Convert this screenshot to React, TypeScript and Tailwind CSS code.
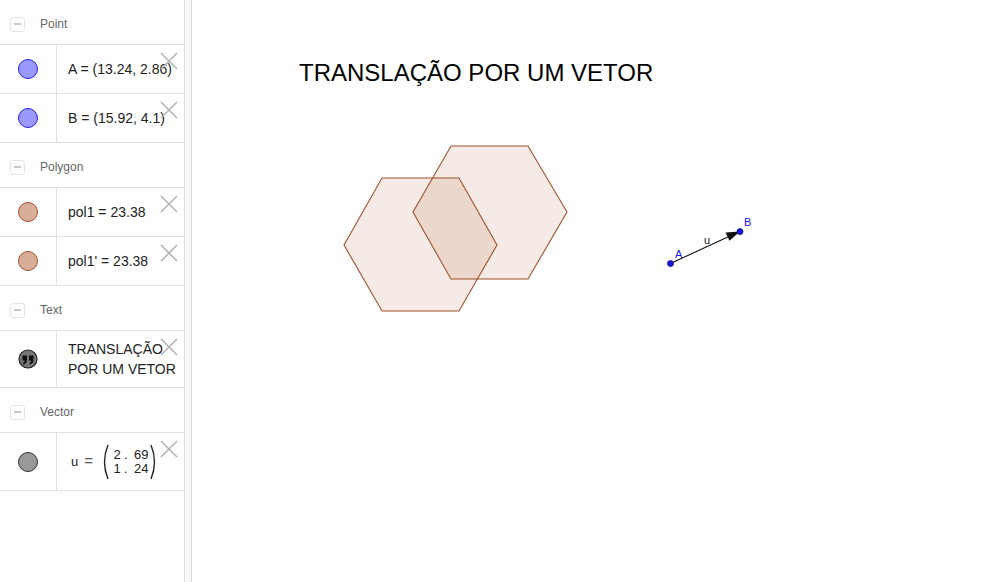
import React from "react";

type Item = {
  id: string;
  icon: "point" | "polygon" | "text" | "vector";
  content: React.ReactNode;
  height: string;
};

type Group = { title: string; items: Item[] };

const font = { fontFamily: '"Liberation Sans", Arial, sans-serif' };

function CloseX() {
  return (
    <svg
      className="absolute right-[6px] top-[7px]"
      width="18"
      height="18"
      viewBox="0 0 18 18"
    >
      <path d="M1 1 L17 17 M17 1 L1 17" stroke="#b4b4b4" strokeWidth="1.6" />
    </svg>
  );
}

function LegendIcon({ kind }: { kind: Item["icon"] }) {
  if (kind === "point")
    return <div className="h-[20px] w-[20px] rounded-full border border-[#2222dd] bg-[#9999ff]" />;
  if (kind === "polygon")
    return <div className="h-[20px] w-[20px] rounded-full border border-[#a0522d] bg-[#d9ae98]" />;
  if (kind === "vector")
    return <div className="h-[20px] w-[20px] rounded-full border border-[#333] bg-[#999]" />;
  return (
    <svg width="20" height="20" viewBox="0 0 20 20">
      <circle cx="10" cy="10" r="9" fill="#777" stroke="#222" strokeWidth="1.2" />
      <path
        d="M4.5 6.5 h4.5 v4.5 q0 3.5 -3.6 4.5 l-0.6 -1.2 q1.8 -0.8 1.8 -2.8 h-2.1 z M11 6.5 h4.5 v4.5 q0 3.5 -3.6 4.5 l-0.6 -1.2 q1.8 -0.8 1.8 -2.8 h-2.1 z"
        fill="#111"
      />
    </svg>
  );
}

function VectorValue() {
  return (
    <div className="flex items-center pl-[3px] text-[13px] text-[#222]" style={font}>
      <span>u</span>
      <span className="ml-[6px] mr-[7px] text-[15px] text-[#555]">=</span>
      <svg width="9" height="36" viewBox="0 0 9 36">
        <path d="M8 1 Q1 18 8 35" stroke="#222" strokeWidth="1.4" fill="none" />
      </svg>
      <div className="ml-[1px] flex flex-col leading-[14px]">
        <div className="flex">
          <span className="w-[14px] text-center">2</span>
          <span className="w-[10px]">.</span>
          <span>69</span>
        </div>
        <div className="flex">
          <span className="w-[14px] text-center">1</span>
          <span className="w-[10px]">.</span>
          <span>24</span>
        </div>
      </div>
      <svg width="9" height="36" viewBox="0 0 9 36" className="ml-[2px]">
        <path d="M1 1 Q8 18 1 35" stroke="#222" strokeWidth="1.4" fill="none" />
      </svg>
    </div>
  );
}

const groups: Group[] = [
  {
    title: "Point",
    items: [
      { id: "A", icon: "point", height: "h-[49px]", content: "A = (13.24, 2.86)" },
      { id: "B", icon: "point", height: "h-[49px]", content: "B = (15.92, 4.1)" },
    ],
  },
  {
    title: "Polygon",
    items: [
      { id: "pol1", icon: "polygon", height: "h-[49px]", content: "pol1 = 23.38" },
      { id: "pol1b", icon: "polygon", height: "h-[49px]", content: "pol1' = 23.38" },
    ],
  },
  {
    title: "Text",
    items: [
      {
        id: "text1",
        icon: "text",
        height: "h-[57px]",
        content: (
          <span className="leading-[20px]">
            TRANSLAÇÃO
            <br />
            POR UM VETOR
          </span>
        ),
      },
    ],
  },
  {
    title: "Vector",
    items: [{ id: "u", icon: "vector", height: "h-[58px]", content: <VectorValue /> }],
  },
];

function hexPoints(pts: [number, number][]) {
  return pts.map((p) => p.join(",")).join(" ");
}

const hex1: [number, number][] = [
  [382, 178],
  [459, 178],
  [497, 245],
  [459, 311],
  [382, 311],
  [344, 245],
];
const hex2: [number, number][] = [
  [451, 146],
  [528, 146],
  [567, 212],
  [528, 279],
  [451, 279],
  [413, 212],
];

export default function App() {
  return (
    <div className="flex h-screen w-full overflow-hidden bg-white" style={font}>
      {/* algebra view */}
      <div className="w-[185px] shrink-0 border-r border-[#dcdcdc]">
        {groups.map((g) => (
          <div key={g.title}>
            <div className="flex h-[45px] items-center border-b border-[#e0e0e0] pl-[10px] pt-[4px]">
              <div className="flex h-[15px] w-[15px] items-center justify-center rounded-[3px] border border-[#e4e4e4]">
                <div className="h-[1.5px] w-[7px] bg-[#c8c8c8]" />
              </div>
              <span className="ml-[15px] text-[12px] text-[#666]">{g.title}</span>
            </div>
            {g.items.map((it) => (
              <div key={it.id} className={"relative flex border-b border-[#e0e0e0] " + it.height}>
                <div className="flex w-[57px] shrink-0 items-center justify-center border-r border-[#e0e0e0] pr-[1px]">
                  <LegendIcon kind={it.icon} />
                </div>
                <div className="flex items-center pl-[11px] text-[14px] text-[#222]">
                  {it.content}
                </div>
                <CloseX />
              </div>
            ))}
          </div>
        ))}
      </div>

      {/* splitter */}
      <div className="w-[7px] shrink-0 border-r border-[#d6d6d6] bg-[#f7f7f7]" />

      {/* graphics view */}
      <div className="relative flex-1">
        <div className="absolute left-[107px] top-[55px] whitespace-nowrap text-[24px] text-black">
          TRANSLAÇÃO POR UM VETOR
        </div>
        <svg
          className="absolute left-[-192px] top-0"
          width="1000"
          height="582"
          viewBox="0 0 1000 582"
        >
          <polygon
            points={hexPoints(hex1)}
            fill="rgba(153,51,0,0.1)"
            stroke="#a0522d"
            strokeWidth="1.1"
          />
          <polygon
            points={hexPoints(hex2)}
            fill="rgba(153,51,0,0.1)"
            stroke="#a0522d"
            strokeWidth="1.1"
          />
          <line x1="670.5" y1="263.5" x2="730" y2="236" stroke="#111" strokeWidth="1.1" />
          <polygon points="740,231.6 725.5,232.4 729.5,240.8" fill="#111" />
          <circle cx="670.5" cy="263.5" r="3" fill="#1414e6" stroke="#101060" strokeWidth="0.8" />
          <circle cx="740" cy="231.6" r="3" fill="#1414e6" stroke="#101060" strokeWidth="0.8" />
          <text x="675" y="258" fontSize="11" fill="#1414e6" fontFamily="Liberation Sans, Arial, sans-serif">
            A
          </text>
          <text x="744" y="226" fontSize="11" fill="#1414e6" fontFamily="Liberation Sans, Arial, sans-serif">
            B
          </text>
          <text x="704" y="244" fontSize="11" fill="#111" fontFamily="Liberation Sans, Arial, sans-serif">
            u
          </text>
        </svg>
      </div>
    </div>
  );
}
